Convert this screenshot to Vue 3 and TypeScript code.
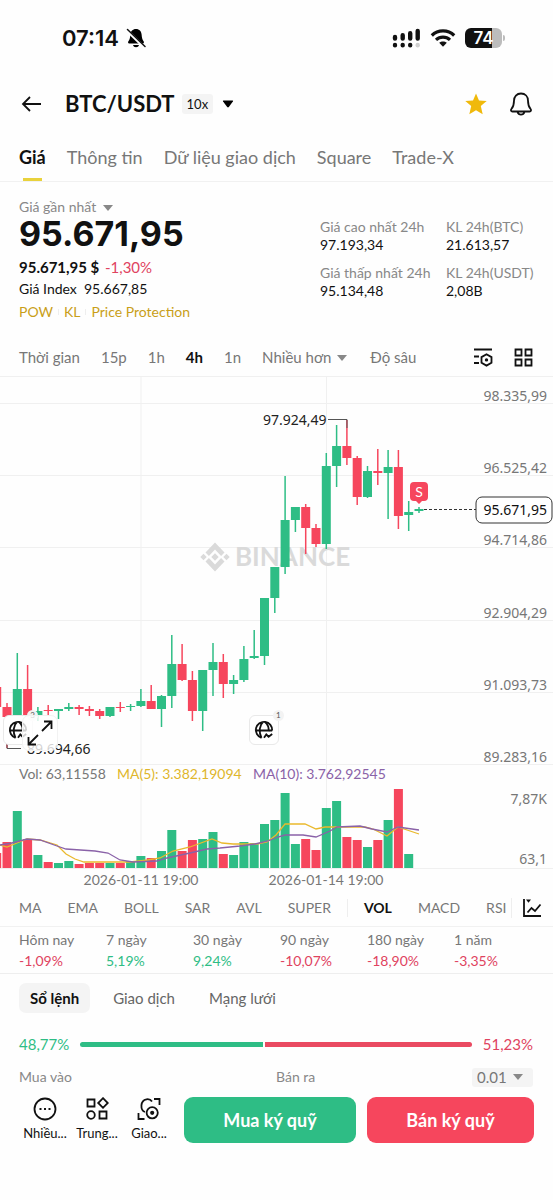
<script setup lang="ts">
import { ref } from 'vue'

type Candle = [up: number, high: number, top: number, bottom: number, low: number, volumeTop: number]

const tabs = ['Giá', 'Thông tin', 'Dữ liệu giao dịch', 'Square', 'Trade-X']
const activeTab = ref('Giá')
const frames = ['Thời gian', '15p', '1h', '4h', '1n']
const activeFrame = ref('4h')
const overlays = ['MA', 'EMA', 'BOLL', 'SAR', 'AVL', 'SUPER']
const studies = ['VOL', 'MACD', 'RSI']
const activeStudy = ref('VOL')
const bookTabs = ['Sổ lệnh', 'Giao dịch', 'Mạng lưới']
const activeBook = ref('Sổ lệnh')
const buyDepth = 47
const tick = ref('0.01')

const stats = [
  { label: 'Giá cao nhất 24h', value: '97.193,34' },
  { label: 'KL 24h(BTC)', value: '21.613,57' },
  { label: 'Giá thấp nhất 24h', value: '95.134,48' },
  { label: 'KL 24h(USDT)', value: '2,08B' },
]

const performance = [
  { label: 'Hôm nay', value: '-1,09%' },
  { label: '7 ngày', value: '5,19%' },
  { label: '30 ngày', value: '9,24%' },
  { label: '90 ngày', value: '-10,07%' },
  { label: '180 ngày', value: '-18,90%' },
  { label: '1 năm', value: '-3,35%' },
]

const axis = [
  { y: 27, label: '98.335,99' },
  { y: 99, label: '96.525,42' },
  { y: 171, label: '94.714,86' },
  { y: 244, label: '92.904,29' },
  { y: 316, label: '91.093,73' },
  { y: 388, label: '89.283,16' },
]

const candles: Candle[] = [
  [0, 311, 311, 331, 331, 477],
  [0, 327, 331, 341, 372, 466],
  [1, 277, 313, 341, 341, 435],
  [0, 289, 313, 341, 341, 463],
  [1, 331, 335, 339, 345, 479],
  [0, 329, 334, 335, 339, 486],
  [1, 333, 333, 335, 343, 487],
  [1, 327, 331, 333, 335, 485],
  [0, 329, 331, 333, 339, 488],
  [0, 330, 333, 335, 340, 487],
  [0, 333, 335, 340, 343, 487],
  [1, 331, 331, 340, 341, 487],
  [0, 326, 331, 332, 336, 487],
  [1, 328, 330, 331, 335, 485],
  [1, 313, 325, 330, 331, 480],
  [0, 309, 325, 333, 333, 482],
  [1, 319, 320, 333, 351, 475],
  [1, 259, 288, 320, 332, 454],
  [0, 268, 288, 304, 305, 475],
  [0, 295, 304, 335, 345, 464],
  [1, 294, 294, 335, 355, 463],
  [1, 267, 286, 294, 320, 456],
  [0, 278, 286, 308, 322, 478],
  [1, 299, 304, 308, 318, 479],
  [1, 270, 283, 304, 306, 466],
  [1, 254, 280, 282, 283, 467],
  [1, 222, 222, 280, 289, 448],
  [1, 191, 191, 222, 237, 444],
  [1, 100, 144, 191, 198, 417],
  [1, 131, 131, 144, 156, 468],
  [0, 128, 131, 152, 178, 463],
  [0, 148, 152, 168, 171, 474],
  [1, 77, 90, 168, 173, 432],
  [1, 49, 70, 90, 111, 425],
  [0, 44, 70, 82, 89, 461],
  [0, 80, 82, 121, 129, 464],
  [1, 90, 95, 121, 122, 471],
  [0, 73, 95, 97, 109, 464],
  [1, 74, 91, 97, 143, 444],
  [0, 74, 91, 140, 153, 413],
  [1, 125, 136, 139, 155, 478],
  [1, 131, 133, 135, 137, 492],
]

const candleX = (index: number) => -3.3 + index * 10.3
const tone = (up: number) => (up ? 'rise' : 'fall')

const ma5 = '0,469 7,471 17,467 27,463 40,464 57,469 66,478 75,483 84,486 130,486 148,484 160,482 173,475 190,471 212,463 222,467 233,468 257,468 267,466 276,459 285,448 305,448 316,453 325,451 337,451 365,451 373,453 387,460 398,451 419,458'
const ma10 = '0,469 12,467 27,463 40,464 57,470 66,473 95,475 108,477 120,484 133,486 157,485 167,482 190,477 207,473 220,472 240,470 255,468 268,465 278,461 285,459 303,459 316,461 330,455 337,451 360,450 372,453 387,456 398,451 419,454'
</script>

<template>
  <main class="screen">
    <div class="status">
      <span class="clock">07:14</span>
      <svg class="muted" width="20" height="20" viewBox="0 0 20 20" aria-hidden="true">
        <path d="M10 1c3.400 0 5.300 2.300 5.600 5.400.3 3.300.7 5 2 6.900.7 1 .3 2.200-.7 2.200H3.100c-1 0-1.400-1.200-.7-2.200C3.700 11.400 4.100 9.700 4.400 6.400 4.700 3.300 6.600 1 10 1z" />
        <path d="M7 17h6c-.4 1.500-1.500 2.200-3 2.200S7.400 18.500 7 17z" />
        <path d="M.5 2L18 19" stroke="#fff" stroke-width="3" />
        <path d="M1.500 1.500L19 18.500" stroke="#111" stroke-width="1.500" stroke-linecap="round" />
      </svg>
      <span class="spacer"></span>
      <svg width="29" height="20" viewBox="0 0 29 20" aria-hidden="true">
        <g stroke="#111" stroke-width="4.400" stroke-linecap="round">
          <path d="M3 9v1.500M10.700 7.300v3.200M18.200 5.200v5.300M25.700 3v7.500M3 17v.2M10.700 17v.2M18.200 17v.2" />
          <path d="M25.700 17v.2" stroke="#d0d0d0" />
        </g>
      </svg>
      <svg class="wifi" width="26" height="20" viewBox="0 0 26 20" fill="none" stroke="#111" stroke-width="3.200" aria-hidden="true">
        <path d="M1.800 7.500C8 1.400 18 1.400 24.200 7.500M6 11.800c4-3.700 10-3.700 14 0" />
        <path d="M13 18.800l-3.800-4c2.200-1.900 5.400-1.900 7.600 0z" fill="#111" stroke="none" />
      </svg>
      <span class="battery"><span class="charge">74</span></span>
      <span class="nub"></span>
    </div>

    <header class="header">
      <button class="icon-btn" aria-label="Quay lại">
        <svg width="22" height="20" viewBox="0 0 22 20" class="line"><path d="M21 10H3M10 3l-7 7 7 7" /></svg>
      </button>
      <button class="pair">
        <span class="pair-name">BTC/USDT</span>
        <span class="leverage">10x</span>
        <svg width="12" height="8" viewBox="0 0 12 8"><path d="M1.500.500h9q1 0 .4.900L6.800 7q-.8.900-1.600 0L1.100 1.400Q.500.500 1.500.500z" /></svg>
      </button>
      <span class="spacer"></span>
      <button class="icon-btn" aria-label="Yêu thích">
        <svg width="22" height="22" viewBox="0 0 22 22"><path d="M11 .5l3 7 7.700.6-5.900 5 1.900 8.200L11 17.200l-6.700 4.100 1.900-8.200-5.900-5 7.700-.6z" fill="#f0b90b" /></svg>
      </button>
      <button class="icon-btn bell" aria-label="Thông báo giá">
        <svg width="24" height="24" viewBox="0 0 24 24" class="line"><path d="M12 1.500c-4.300 0-7 3-7 7.200 0 4.300-.8 6.300-2.600 8.300-.9 1.100-.4 2.500 1 2.500h17.200c1.400 0 1.900-1.400 1-2.500-1.800-2-2.600-4-2.600-8.300 0-4.200-2.700-7.200-7-7.200zM8.500 20c.7 2 1.900 2.700 3.500 2.700s2.800-.7 3.500-2.700" /></svg>
      </button>
    </header>

    <nav class="tabs">
      <button v-for="tab in tabs" :key="tab" :class="{ active: tab === activeTab }" @click="activeTab = tab">{{ tab }}</button>
    </nav>

    <section class="summary">
      <div class="quote">
        <button class="price-kind">Giá gần nhất <span class="caret"></span></button>
        <strong class="price">95.671,95</strong>
        <p class="fiat">95.671,95 $ <span class="red">-1,30%</span></p>
        <p class="index">Giá Index&nbsp; 95.667,85</p>
        <p class="tags"><a href="#pow">POW</a><i></i><a href="#kl">KL</a><i></i><a href="#protection">Price Protection</a></p>
      </div>
      <dl class="stats">
        <div v-for="stat in stats" :key="stat.label">
          <dt>{{ stat.label }}</dt>
          <dd>{{ stat.value }}</dd>
        </div>
      </dl>
    </section>

    <nav class="frames">
      <button v-for="frame in frames" :key="frame" :class="{ active: frame === activeFrame }" @click="activeFrame = frame">{{ frame }}</button>
      <button class="more">Nhiều hơn <span class="caret"></span></button>
      <button>Độ sâu</button>
      <span class="spacer"></span>
      <button class="icon-btn" aria-label="Cài đặt biểu đồ">
        <svg width="20" height="20" viewBox="0 0 20 20" class="line"><path d="M1 2.500h18M1 9.500h5M1 16h5M13.500 7.200l5 2.900v5.600l-5 2.900-5-2.900v-5.600z" /><circle cx="13.500" cy="12.900" r="1.700" fill="#111" stroke="none" /></svg>
      </button>
      <button class="icon-btn" aria-label="Bố cục">
        <svg width="19" height="19" viewBox="0 0 19 19" class="line"><path d="M1.500 1.500h6v6h-6zM11.500 1.500h6v6h-6zM1.500 11.500h6v6h-6zM11.500 11.500h6v6h-6z" /></svg>
      </button>
    </nav>

    <section class="chart">
      <svg class="plot" viewBox="0 0 553 514" role="img" aria-label="Biểu đồ nến BTC/USDT">
        <g class="gridlines">
          <path v-for="line in axis" :key="line.y" :d="`M0 ${line.y + 0.5}H553`" />
          <path d="M0 .5H553M0 492.500H553M141 0V492M326.500 0V492" />
        </g>
        <g fill="#dadada">
          <g transform="translate(215 181)">
            <path d="M-9.500-4.500L0-14.500l9.500 10-3.400 3.500L0-7.500-6.100-1zM-9.500 4.500L0 14.500l9.500-10L6.100 1 0 7.500-6.100 1zM0-3.700L3.700 0 0 3.700-3.700 0zM-11.500-3.200L-8.300 0l-3.200 3.200L-14.700 0zM11.500-3.200L14.700 0l-3.200 3.200L8.300 0z" />
          </g>
          <text class="watermark" x="235" y="190">BINANCE</text>
        </g>
        <g v-for="(c, i) in candles" :key="i" :class="tone(c[0])">
          <path :d="`M${candleX(i)} ${c[1]}V${c[4]}`" />
          <rect :x="candleX(i) - 4.5" :y="c[2]" width="9" :height="c[3] - c[2]" />
          <rect :x="candleX(i) - 4.5" :y="c[5]" width="9" :height="492 - c[5]" />
        </g>
        <polyline :points="ma5" class="average" stroke="#eab92d" />
        <polyline :points="ma10" class="average" stroke="#8a62a8" />
        <path d="M328 43.500H347V52M7 368v4.500H21" class="marker" />
        <text class="extreme" x="263" y="49">97.924,49</text>
        <text class="extreme" x="27" y="378">89.694,66</text>
        <text v-for="line in axis" :key="line.label" class="axis-label" x="547" :y="line.y - 2">{{ line.label }}</text>
        <path d="M424 133.500H476" class="current" />
        <rect x="476" y="121" width="76" height="26" rx="6" fill="#fff" stroke="#333" />
        <text class="axis-label now" x="547" y="139">95.671,95</text>
        <path d="M414 106h10q4 0 4 4v11q0 4-4 4h-2l-3 3-3-3h-2q-4 0-4-4v-11q0-4 4-4z" fill="#f6465d" />
        <text class="sell" x="419" y="121">S</text>
        <text class="legend" x="19" y="403">Vol: 63,11558</text>
        <text class="legend ma-five" x="117" y="403">MA(5): 3.382,19094</text>
        <text class="legend ma-ten" x="253" y="403">MA(10): 3.762,92545</text>
        <text class="axis-label" x="547" y="428">7,87K</text>
        <text class="axis-label" x="547" y="488">63,1</text>
        <text class="date" x="141" y="509">2026-01-11 19:00</text>
        <text class="date" x="326" y="509">2026-01-14 19:00</text>
      </svg>
      <button class="news first" aria-label="Tin tức, 3">
        <svg width="20" height="20" viewBox="0 0 20 20" class="line"><path d="M18.200 10.500A8.200 8.200 0 1 0 7.500 17.800M1.800 10.500h16.400M7.500 17.800C4.500 12 5.500 5 9 2M11 2c3 2.500 4 6 3.500 9.500M10 17.800l2.300-3.300 2.300 2.200 3.600-2.700" /></svg>
        <span class="count">3</span>
      </button>
      <button class="news second" aria-label="Tin tức, 1">
        <svg width="20" height="20" viewBox="0 0 20 20" class="line"><path d="M18.200 10.500A8.200 8.200 0 1 0 7.500 17.800M1.800 10.500h16.400M7.500 17.800C4.500 12 5.500 5 9 2M11 2c3 2.500 4 6 3.500 9.500M10 17.800l2.300-3.300 2.300 2.200 3.600-2.700" /></svg>
        <span class="count">1</span>
      </button>
      <button class="expand" aria-label="Toàn màn hình">
        <svg width="26" height="26" viewBox="0 0 26 26" class="line"><path d="M15 11l9-9M17 1.500h7.500V9M11 15l-9 9M1.500 17v7.500H9" /></svg>
      </button>
    </section>

    <div class="indicators">
      <div class="indicator-list">
        <button v-for="name in overlays" :key="name">{{ name }}</button>
        <i class="rule"></i>
        <button v-for="name in studies" :key="name" :class="{ active: name === activeStudy }" @click="activeStudy = name">{{ name }}</button>
      </div>
      <button class="icon-btn indicator-menu" aria-label="Chỉ báo">
        <svg width="20" height="20" viewBox="0 0 20 20" class="line"><path d="M2 1v17h17M5.500 14.500l4-4.500 3.500 3 5.500-6.500" /><path d="M4 1.500h5L6.500 4.800z" fill="#111" stroke="none" /></svg>
      </button>
    </div>

    <dl class="performance">
      <div v-for="item in performance" :key="item.label">
        <dt>{{ item.label }}</dt>
        <dd :class="item.value.startsWith('-') ? 'red' : 'green'">{{ item.value }}</dd>
      </div>
    </dl>

    <nav class="book-tabs">
      <button v-for="tab in bookTabs" :key="tab" :class="{ active: tab === activeBook }" @click="activeBook = tab">{{ tab }}</button>
    </nav>

    <div class="ratio">
      <span class="green">48,77%</span>
      <div class="track">
        <span class="buy-share" :style="{ flexGrow: buyDepth }"></span>
        <span class="sell-share" :style="{ flexGrow: 100 - buyDepth }"></span>
      </div>
      <span class="red">51,23%</span>
    </div>

    <div class="book-head">
      <span>Mua vào</span>
      <span>Bán ra</span>
      <label class="tick">
        <select v-model="tick" aria-label="Bước giá"><option>0.01</option><option>0.1</option><option>1</option></select>
        <span class="caret"></span>
      </label>
    </div>

    <footer class="actions">
      <button class="tool">
        <svg width="24" height="24" viewBox="0 0 24 24" class="line"><circle cx="12" cy="12" r="10.500" /><path d="M6.500 12h2M11 12h2M15.500 12h2" stroke-width="2.200" /></svg>
        <span>Nhiều...</span>
      </button>
      <button class="tool">
        <svg width="24" height="24" viewBox="0 0 24 24" class="line"><path d="M2.500 2.500h7v7h-7zM14.500 14.500h7v7h-7zM18 1.200L22.800 6 18 10.800 13.200 6z" /><circle cx="6" cy="18" r="3.800" /></svg>
        <span>Trung...</span>
      </button>
      <button class="tool">
        <svg width="24" height="24" viewBox="0 0 24 24" class="line"><path d="M17 2h5.500v6M1.500 16v6H7.500M8 15C3 13 3 3.500 9.500 2.300c2.500-.4 4.300.4 5.500 2.200" /><circle cx="15.200" cy="15.800" r="5.600" /><circle cx="15.200" cy="15.800" r="2.100" fill="#111" stroke="none" /></svg>
        <span>Giao...</span>
      </button>
      <button class="trade buy">Mua ký quỹ</button>
      <button class="trade sell-btn">Bán ký quỹ</button>
    </footer>
  </main>
</template>

<style>
body { margin: 0; background: #fefefe; }
</style>

<style scoped>
.screen { font-family: Lato, "Noto Sans", sans-serif; color: #111; font-size: 14px; line-height: 18px; overflow: hidden; }
button, select { font: inherit; color: inherit; background: none; border: 0; padding: 0; margin: 0; cursor: pointer; white-space: nowrap; }
p, dl, dd { margin: 0; }
.spacer { flex: 1; }
.line { fill: none; stroke: #111; stroke-width: 1.8; }
.icon-btn { display: flex; align-items: center; justify-content: center; }
.red { color: #e0435f; }
.green { color: #2ebd85; }
.caret { display: inline-block; border: 5px solid transparent; border-top: 6px solid #888; border-bottom: 0; }

.status { display: flex; align-items: center; height: 76px; padding: 0 48px 0 62px; }
.clock { font: 600 22px/26px Inter, sans-serif; }
.muted { margin-left: 7px; }
.wifi { margin: 0 9px; }
.battery { width: 37px; height: 20px; border-radius: 6px; background: linear-gradient(90deg, #111 74%, #bcbcbc 74%); overflow: hidden; }
.charge { display: block; font: 600 17px/20px Inter, sans-serif; color: #fff; text-align: center; }
.nub { width: 2px; height: 6px; margin-left: 1px; border-radius: 0 2px 2px 0; background: #bcbcbc; }

.header { display: flex; align-items: center; height: 56px; padding: 0 20px; }
.pair { display: flex; align-items: center; margin-left: 23px; }
.pair-name { font-size: 22px; line-height: 26px; font-weight: 700; }
.leverage { margin: 0 9px 0 7px; padding: 1px 5px; background: #f4f4f4; border-radius: 3px; font-size: 13px; }
.bell { margin-left: 22px; }

.tabs { display: flex; gap: 21px; height: 49px; padding: 0 19px; border-bottom: 1px solid #f1f1f1; color: #777; font-size: 18px; }
.tabs button { position: relative; }
.tabs .active { color: #111; font-weight: 700; }
.tabs .active::after { content: ""; position: absolute; bottom: 0; left: 4px; right: 4px; height: 3px; background: #e9d23c; }

.summary { display: flex; justify-content: space-between; height: 156px; padding: 0 19px; box-sizing: border-box; }
.quote { padding-top: 16px; }
.price-kind { display: block; color: #888; }
.price-kind .caret { margin: 0 0 1px 3px; }
.price { display: block; font: 700 34px/36px Inter, sans-serif; }
.fiat { margin-top: 5px; font-size: 15px; font-weight: 700; line-height: 20px; }
.fiat .red { margin-left: 2px; font-weight: 400; }
.index { margin-top: 3px; }
.tags { display: flex; align-items: center; margin-top: 5px; }
.tags a { color: #c99f18; text-decoration: none; }
.tags i { width: 1px; height: 6px; margin: 0 5px; background: #eee; }
.stats { display: grid; grid-template-columns: 126px 88px; row-gap: 10px; align-content: start; padding-top: 36px; }
.stats dt { color: #888; white-space: nowrap; }

.frames { display: flex; gap: 21px; align-items: center; height: 38px; padding: 0 20px 0 19px; color: #777; font-size: 15px; }
.frames .active { color: #111; font-weight: 700; }
.more .caret { margin: 0 2px 2px 2px; }

.chart { position: relative; }
.plot { display: block; width: 100%; height: auto; }
.gridlines { stroke: #f0f0f0; }
.watermark { font: 700 26px Lato, sans-serif; }
.rise { fill: #2ebd85; stroke: #2ebd85; stroke-width: 1.5; }
.fall { fill: #f6465d; stroke: #f6465d; stroke-width: 1.5; }
.rise rect, .fall rect { stroke: none; }
.average { fill: none; stroke-width: 1.3; }
.marker { fill: none; stroke: #555; }
.extreme { font: 14px "Noto Sans", sans-serif; fill: #222; }
.axis-label { font: 14px "Noto Sans", sans-serif; fill: #777; text-anchor: end; }
.now { fill: #111; }
.current { stroke: #333; stroke-dasharray: 3 2; }
.sell { font: 14px Lato, sans-serif; fill: #fff; text-anchor: middle; }
.legend { font: 14px Lato, sans-serif; fill: #777; }
.ma-five { fill: #dfb62b; }
.ma-ten { fill: #8a62a8; }
.date { font: 14px Lato, sans-serif; fill: #777; text-anchor: middle; }
.news { position: absolute; top: 66%; width: 30px; height: 30px; display: flex; align-items: center; justify-content: center; border: 1px solid #e9e9e9; border-radius: 6px; background: #fff; }
.first { left: 3px; }
.second { left: 45%; }
.count { position: absolute; top: -6px; right: -6px; width: 11px; border-radius: 6px; background: #f3f3f3; color: #555; font-size: 8px; line-height: 11px; }
.expand { position: absolute; left: 4%; top: 66%; width: 36px; height: 36px; display: flex; align-items: center; justify-content: center; border: 1px solid #f2f2f2; border-radius: 7px; background: rgb(255 255 255 / 80%); }

.indicators { display: flex; align-items: center; height: 36px; padding-right: 11px; border-bottom: 1px solid #f1f1f1; color: #777; font-size: 14px; }
.indicator-list { flex: 1; min-width: 0; display: flex; align-items: center; gap: 26px; padding-left: 19px; overflow: hidden; }
.indicator-list .active { color: #111; font-weight: 700; }
.rule { flex: none; width: 1px; height: 18px; margin: 0 -10px; background: #eee; }
.indicator-menu { padding-left: 10px; border-left: 1px solid #eee; }

.performance { display: grid; grid-template-columns: repeat(6, 1fr); height: 46px; padding: 0 12px 0 19px; border-bottom: 1px solid #eee; }
.performance dt { margin-top: 4px; color: #777; }
.performance dd { margin-top: 3px; }

.book-tabs { display: flex; align-items: center; gap: 12px; height: 48px; padding: 0 19px; color: #666; font-size: 15px; }
.book-tabs button { height: 30px; padding: 0 11px; border-radius: 7px; }
.book-tabs .active { background: #f4f4f4; color: #111; font-weight: 700; }

.ratio { display: flex; align-items: center; gap: 11px; height: 44px; padding: 0 20px 0 19px; font-size: 15px; }
.track { flex: 1; display: flex; gap: 2px; height: 5px; }
.buy-share { background: #2ebd85; border-radius: 3px 0 0 3px; }
.sell-share { background: #ea4a62; border-radius: 0 3px 3px 0; }

.book-head { display: grid; grid-template-columns: 1fr 1fr; align-items: center; height: 22px; padding: 0 20px 0 19px; color: #888; position: relative; }
.tick { position: absolute; right: 20px; display: flex; align-items: center; gap: 6px; height: 19px; padding: 0 10px 0 5px; border-radius: 3px; background: #f4f4f4; color: #777; }
.tick select { appearance: none; font-size: 15px; line-height: 18px; }

.actions { display: flex; align-items: flex-start; padding: 9px 19px 56px 18px; }
.tool { width: 54px; flex: none; margin-right: -2px; display: flex; flex-direction: column; align-items: center; gap: 3px; font-size: 13px; }
.trade { height: 46px; border-radius: 9px; color: #fff; font-size: 18px; font-weight: 700; }
.buy { flex: 172; margin-left: 10px; background: #2ebd85; }
.sell-btn { flex: 167; margin-left: 11px; background: #f6465d; }
</style>
